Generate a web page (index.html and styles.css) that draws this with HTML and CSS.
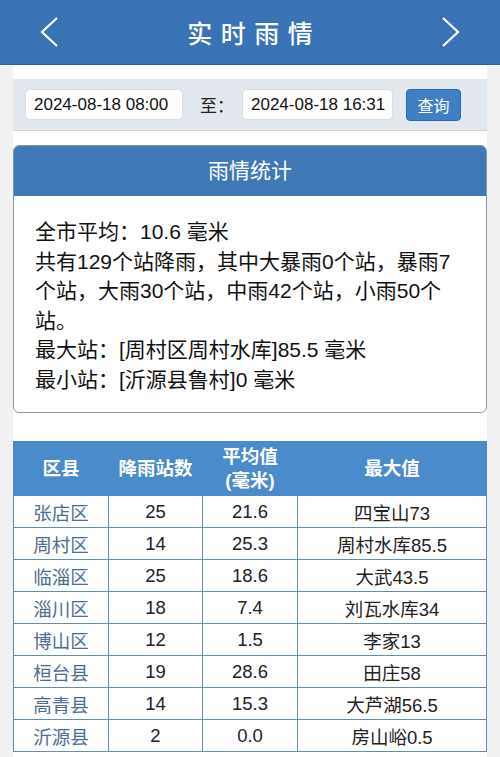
FILE: index.html
```html
<!DOCTYPE html>
<html lang="zh">
<head>
<meta charset="utf-8">
<title>实时雨情</title>
<link rel="stylesheet" href="styles.css">
</head>
<body>
<header class="topbar">
  <svg class="nav" width="24" height="32" viewBox="0 0 24 32"><polyline points="19,2 4,16 19,30" fill="none" stroke="#fff" stroke-width="2.2"/></svg>
  <h1 class="title">实时雨情</h1>
  <svg class="nav" width="24" height="32" viewBox="0 0 24 32"><polyline points="5,2 20,16 5,30" fill="none" stroke="#fff" stroke-width="2.2"/></svg>
</header>
<main class="main">
  <div class="filter">
    <div class="field field-start">2024-08-18 08:00</div>
    <span class="to">至：</span>
    <div class="field field-end">2024-08-18 16:31</div>
    <button class="btn">查询</button>
  </div>
  <section class="card">
    <div class="card-head">雨情统计</div>
    <div class="card-body">
      <p>全市平均：10.6 毫米</p>
      <p>共有129个站降雨，其中大暴雨0个站，暴雨7个站，大雨30个站，中雨42个站，小雨50个站。</p>
      <p>最大站：[周村区周村水库]85.5 毫米</p>
      <p>最小站：[沂源县鲁村]0 毫米</p>
    </div>
  </section>
  <table class="grid">
    <colgroup><col class="c1"><col class="c2"><col class="c3"><col class="c4"></colgroup>
    <thead>
      <tr><th>区县</th><th>降雨站数</th><th>平均值<br>(毫米)</th><th>最大值</th></tr>
    </thead>
    <tbody>
      <tr><td class="area">张店区</td><td>25</td><td>21.6</td><td>四宝山73</td></tr>
      <tr><td class="area">周村区</td><td>14</td><td>25.3</td><td>周村水库85.5</td></tr>
      <tr><td class="area">临淄区</td><td>25</td><td>18.6</td><td>大武43.5</td></tr>
      <tr><td class="area">淄川区</td><td>18</td><td>7.4</td><td>刘瓦水库34</td></tr>
      <tr><td class="area">博山区</td><td>12</td><td>1.5</td><td>李家13</td></tr>
      <tr><td class="area">桓台县</td><td>19</td><td>28.6</td><td>田庄58</td></tr>
      <tr><td class="area">高青县</td><td>14</td><td>15.3</td><td>大芦湖56.5</td></tr>
      <tr><td class="area">沂源县</td><td>2</td><td>0.0</td><td>房山峪0.5</td></tr>
    </tbody>
  </table>
</main>
</body>
</html>
```

FILE: styles.css
```css
* { box-sizing: border-box; }
html, body { margin: 0; padding: 0; }
body {
  background: #f1f1f1;
  font-family: "Liberation Sans", "Noto Sans CJK SC", sans-serif;
  color: #1a1a1a;
  width: 500px;
  height: 757px;
  overflow: hidden;
}
.topbar {
  height: 65px;
  background: #3a73b5;
  border-bottom: 1px solid #2e5f98;
  display: flex;
  align-items: center;
  justify-content: space-between;
  padding: 0 38px 0 38px;
}
.nav { display: block; }
.title {
  margin: 0;
  color: #fff;
  font-size: 25px;
  font-weight: 500;
  letter-spacing: 8.5px;
  margin-right: -8.5px;
  font-family: "Noto Sans CJK SC", sans-serif;
}
.main {
  margin: 0 13px;
  background: #fff;
  padding-top: 14px;
  height: 692px;
}
.filter {
  height: 52px;
  background: #e3e8ef;
  border-bottom: 1px solid #cdd3dc;
  display: flex;
  align-items: center;
  padding-left: 12px;
}
.field {
  height: 31px;
  background: #fff;
  border: 1px solid #d8dde4;
  border-radius: 5px;
  font-size: 17px;
  line-height: 29px;
  padding-left: 8px;
  color: #111;
  white-space: nowrap;
  overflow: hidden;
}
.field-start { width: 158px; }
.field-end { width: 151px; }
.to {
  font-size: 17px;
  margin-left: 17px;
  width: 42px;
  color: #222;
}
.btn {
  margin-left: 13px;
  width: 55px;
  height: 32px;
  background: #3f80c5;
  border: 1px solid #2c6aa9;
  border-radius: 4px;
  color: #fff;
  font-size: 16px;
  font-family: "Noto Sans CJK SC", sans-serif;
  padding: 0;
}
.card {
  margin-top: 14px;
  border: 1.5px solid #8796a5;
  border-radius: 6px;
  overflow: hidden;
  height: 268px;
}
.card-head {
  height: 50px;
  background: #4078b6;
  color: #fff;
  font-size: 21px;
  text-align: center;
  line-height: 50px;
}
.card-body {
  padding: 21px 20px 0 21px;
  font-size: 21px;
  line-height: 29.5px;
  color: #111;
}
.card-body p { margin: 0; }
.grid {
  margin-top: 28px;
  width: 473px;
  border-collapse: collapse;
  table-layout: fixed;
  font-size: 18.5px;
}
.c1 { width: 95px; }
.c2 { width: 94px; }
.c3 { width: 95px; }
.c4 { width: 189px; }
.grid th {
  background: #4a8bcb;
  color: #fff;
  font-weight: bold;
  height: 54px;
  line-height: 24px;
  border: 1.5px solid #4a8bcb;
  padding: 0;
}
.grid td {
  height: 32px;
  padding: 0;
  text-align: center;
  border: 1.5px solid #5f8db5;
  color: #222;
}
.grid td.area { color: #4a6d95; }
```
